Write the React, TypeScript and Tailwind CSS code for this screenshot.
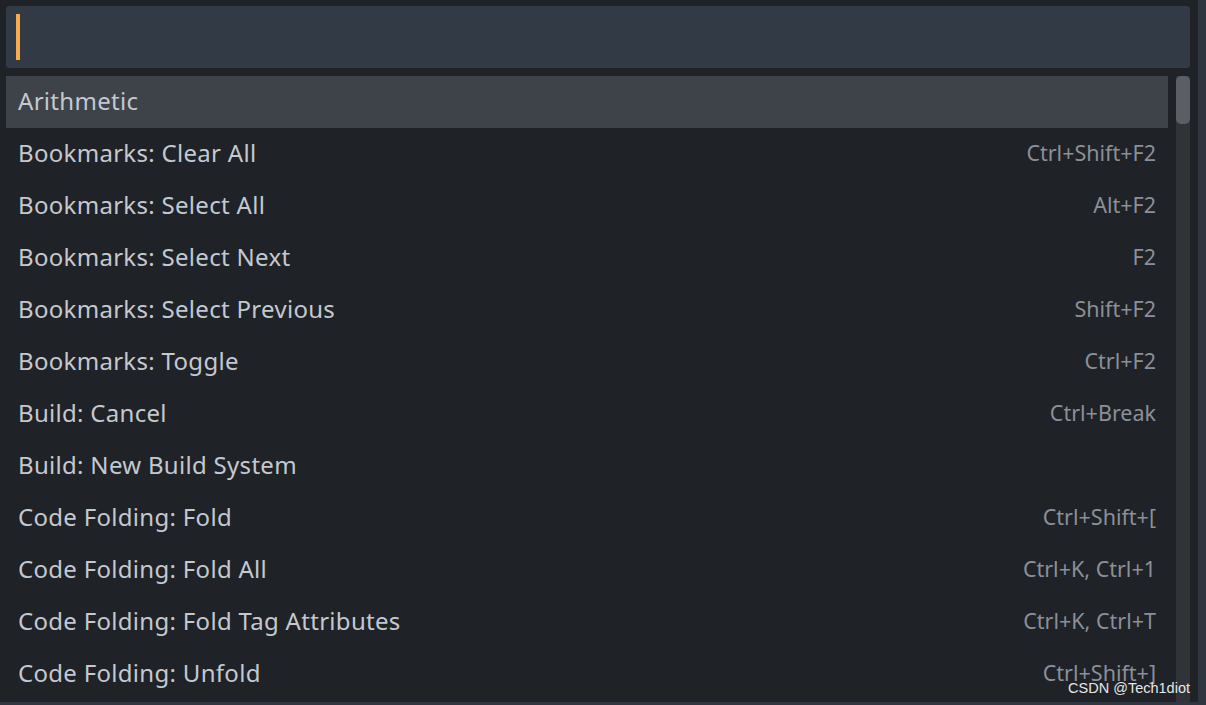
const items: [string, string][] = [
  ['Arithmetic', ''],
  ['Bookmarks: Clear All', 'Ctrl+Shift+F2'],
  ['Bookmarks: Select All', 'Alt+F2'],
  ['Bookmarks: Select Next', 'F2'],
  ['Bookmarks: Select Previous', 'Shift+F2'],
  ['Bookmarks: Toggle', 'Ctrl+F2'],
  ['Build: Cancel', 'Ctrl+Break'],
  ['Build: New Build System', ''],
  ['Code Folding: Fold', 'Ctrl+Shift+['],
  ['Code Folding: Fold All', 'Ctrl+K, Ctrl+1'],
  ['Code Folding: Fold Tag Attributes', 'Ctrl+K, Ctrl+T'],
  ['Code Folding: Unfold', 'Ctrl+Shift+]'],
];

export default function App() {
  return (
    <div className="h-[705px] w-[1206px] bg-[#2f3640] overflow-hidden font-['Noto_Sans',sans-serif]">
      <div className="relative flex h-[702px] w-[1198px] flex-col bg-[#1f2227] pl-[6px] pr-[8px] pt-[6px]">
        {/* Input */}
        <div className="flex h-[62px] shrink-0 items-center rounded-[3px] bg-[#323a45] px-[10px]">
          <div className="h-[46px] w-[4px] bg-[#f7ab4f]" />
        </div>

        {/* List + scrollbar */}
        <div className="mt-[8px] flex min-h-0 flex-1 gap-[8px]">
          <div className="min-w-0 flex-1 overflow-hidden">
            {items.map(([label, keys], i) => (
              <div
                key={label}
                className={
                  'flex h-[52px] items-center justify-between pb-[3px] pl-[12px] pr-[12px] leading-none ' +
                  (i === 0 ? 'bg-[#3e4249]' : '')
                }
              >
                <span className="text-[24px] tracking-[0.3px] text-[#c4c9cf]">{label}</span>
                <span className="text-[21.5px] text-[#8b9098]">{keys}</span>
              </div>
            ))}
          </div>
          <div className="w-[14px] bg-[#303338]">
            <div className="h-[48px] rounded-[5px] bg-[#5b5e64]" />
          </div>
        </div>

        <div className="absolute bottom-[7px] right-[8px] font-['Liberation_Sans',sans-serif] text-[14.5px] leading-none text-[#e6e6e6]">
          CSDN @Tech1diot
        </div>
      </div>
    </div>
  );
}
